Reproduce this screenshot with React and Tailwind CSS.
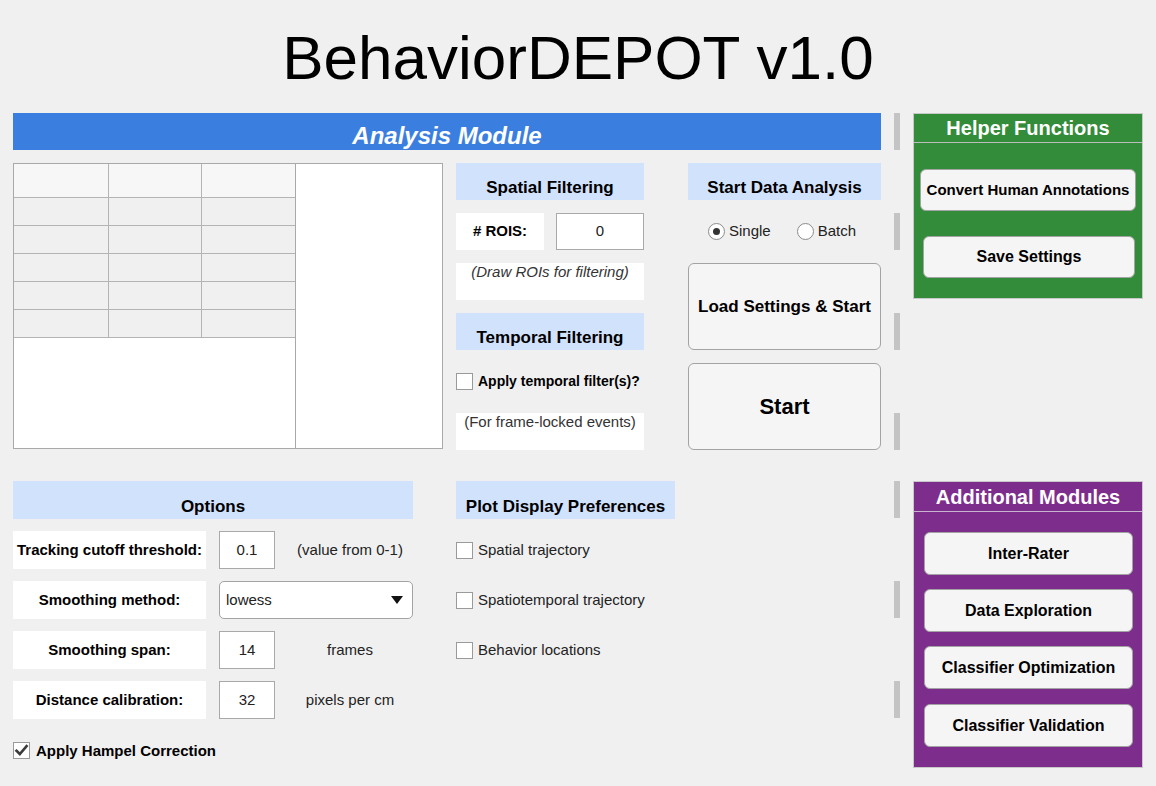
import React from 'react';

const BLUE_HEAD = 'bg-[#d1e2fc] flex items-end justify-center pb-[2px] text-[17px] leading-[20px] font-bold text-black whitespace-nowrap';
const BTN = 'rounded-[6px] border border-[#a3a3a3] bg-[#f5f5f5] font-bold text-black flex items-center justify-center whitespace-nowrap';
const BOX = 'bg-white border border-[#a9a9a9] flex items-center justify-center text-[15px] text-[#222]';

const Checkbox = ({ checked = false }) => (
    <span className="w-[17px] h-[17px] shrink-0 bg-white border border-[#9a9a9a] flex items-center justify-center">
        {checked && (
            <svg width="15" height="15" viewBox="0 0 15 15">
                <path d="M2.5 7.8 L5.8 11 L12.6 3.2" fill="none" stroke="#3c3c3c" strokeWidth="2.6" strokeLinecap="square" />
            </svg>
        )}
    </span>
);

const Radio = ({ on = false }) => (
    <span className="w-[17px] h-[17px] shrink-0 rounded-full bg-white border border-[#8c8c8c] flex items-center justify-center">
        {on && <span className="w-[7px] h-[7px] rounded-full bg-[#333]" />}
    </span>
);

const GrayBars = ({ count }) => (
    <div className="w-[6px] ml-[13px] flex flex-col gap-[63px] shrink-0">
        {Array.from({ length: count }).map((_, i) => <div key={i} className="h-[37px] bg-[#c4c4c4]" />)}
    </div>
);

const DataTable = () => (
    <div className="w-[430px] h-[286px] border border-[#a9a9a9] bg-white flex shrink-0">
        <div className="w-[281px] flex flex-col">
            {[0, 1, 2, 3, 4, 5].map(r => (
                <div key={r} className={`flex border-b border-[#b4b4b4] ${r === 0 ? 'h-[34px] bg-[#f7f7f7]' : 'h-[28px] bg-[#f0f0f0]'}`}>
                    <div className="w-[95px] border-r border-[#b4b4b4]" />
                    <div className="w-[93px] border-r border-[#b4b4b4]" />
                    <div className="flex-1" />
                </div>
            ))}
        </div>
        <div className="flex-1 border-l border-[#a9a9a9] bg-white" />
    </div>
);

const OptionRow = ({ label, children }) => (
    <div className="flex h-[38px] mt-[12px]">
        <div className="w-[193px] bg-white flex items-center justify-center text-[15px] font-bold text-black whitespace-nowrap">{label}</div>
        {children}
    </div>
);

const NumRow = ({ label, value, hint }) => (
    <OptionRow label={label}>
        <div className={`${BOX} w-[56px] ml-[13px]`}>{value}</div>
        <div className="w-[126px] ml-[12px] flex items-center justify-center text-[15px] text-[#222] whitespace-nowrap">{hint}</div>
    </OptionRow>
);

const PlotRow = ({ label }) => (
    <div className="flex items-center h-[38px] mt-[12px]">
        <Checkbox />
        <span className="ml-[5px] text-[15px] text-[#222] whitespace-nowrap">{label}</span>
    </div>
);

export default function App() {
    return (
        <div className="w-[1156px] h-[786px] bg-[#f0f0f0] overflow-hidden font-['Liberation_Sans',Arial,sans-serif] text-black">
            {/* Title */}
            <div className="h-[113px] pt-[27px] text-center text-[62px] leading-[62px] text-black">BehaviorDEPOT v1.0</div>

            {/* Top section */}
            <div className="flex px-[13px]">
                <div className="w-[868px] shrink-0">
                    <div className="h-[37px] bg-[#3a7ee0] pt-[9px] text-center text-white text-[24px] leading-[28px] font-bold italic">Analysis Module</div>
                    <div className="flex mt-[13px] h-[287px]">
                        <DataTable />

                        {/* Filtering */}
                        <div className="w-[188px] ml-[13px] flex flex-col">
                            <div className={`${BLUE_HEAD} h-[37px]`}>Spatial Filtering</div>
                            <div className="flex h-[37px] mt-[13px]">
                                <div className="w-[88px] bg-white flex items-center justify-center text-[15px] font-bold">#&nbsp;ROIS:</div>
                                <div className={`${BOX} w-[88px] ml-[12px]`}>0</div>
                            </div>
                            <div className="h-[37px] mt-[13px] bg-white text-center text-[15px] leading-[18px] italic text-[#333] whitespace-nowrap">(Draw ROIs for filtering)</div>
                            <div className={`${BLUE_HEAD} h-[37px] mt-[13px]`}>Temporal Filtering</div>
                            <div className="flex items-center h-[17px] mt-[23px]">
                                <Checkbox />
                                <span className="ml-[5px] text-[14px] font-bold whitespace-nowrap">Apply temporal filter(s)?</span>
                            </div>
                            <div className="h-[37px] mt-[23px] bg-white text-center text-[15px] leading-[18px] text-[#333] whitespace-nowrap">(For frame-locked events)</div>
                        </div>

                        {/* Start */}
                        <div className="w-[193px] ml-[44px] flex flex-col">
                            <div className={`${BLUE_HEAD} h-[37px]`}>Start Data Analysis</div>
                            <div className="flex items-center h-[37px] mt-[13px] pl-[20px] text-[15px] text-[#222]">
                                <Radio on />
                                <span className="ml-[4px]">Single</span>
                                <span className="ml-[26px]"><Radio /></span>
                                <span className="ml-[4px]">Batch</span>
                            </div>
                            <div className={`${BTN} h-[87px] mt-[13px] text-[17px]`}>Load Settings &amp; Start</div>
                            <div className={`${BTN} h-[87px] mt-[13px] text-[22px]`}>Start</div>
                        </div>
                    </div>
                </div>

                <GrayBars count={4} />

                <div className="w-[230px] h-[186px] ml-[13px] bg-[#338c39] border border-[#c8c8c8] flex flex-col">
                    <div className="h-[29px] border-b border-[#bdbdbd] flex items-center justify-center text-white text-[20px] font-bold whitespace-nowrap">Helper Functions</div>
                    <div className={`${BTN} h-[42px] mt-[26px] ml-[6px] w-[216px] text-[15px]`}>Convert Human Annotations</div>
                    <div className={`${BTN} h-[42px] mt-[25px] ml-[9px] w-[212px] text-[16px]`}>Save Settings</div>
                </div>
            </div>

            {/* Bottom section */}
            <div className="flex px-[13px] mt-[31px]">
                <div className="w-[868px] shrink-0 flex">
                    <div className="w-[400px] flex flex-col">
                        <div className={`${BLUE_HEAD} h-[38px]`}>Options</div>
                        <NumRow label="Tracking cutoff threshold:" value="0.1" hint="(value from 0-1)" />
                        <OptionRow label="Smoothing method:">
                            <div className="w-[194px] ml-[13px] rounded-[5px] bg-white border border-[#a3a3a3] flex items-center justify-between pl-[6px] pr-[9px] text-[15px] text-[#222]">
                                <span>lowess</span>
                                <svg width="12" height="8" viewBox="0 0 12 8"><path d="M0 0 H12 L6 8 Z" fill="#111" /></svg>
                            </div>
                        </OptionRow>
                        <NumRow label="Smoothing span:" value="14" hint="frames" />
                        <NumRow label="Distance calibration:" value="32" hint="pixels per cm" />
                        <div className="flex items-center h-[17px] mt-[23px]">
                            <Checkbox checked />
                            <span className="ml-[6px] pt-[2px] text-[15px] font-bold whitespace-nowrap">Apply Hampel Correction</span>
                        </div>
                    </div>

                    <div className="w-[219px] ml-[43px] flex flex-col">
                        <div className={`${BLUE_HEAD} h-[38px]`}>Plot Display Preferences</div>
                        <PlotRow label="Spatial trajectory" />
                        <PlotRow label="Spatiotemporal trajectory" />
                        <PlotRow label="Behavior locations" />
                    </div>
                </div>

                <GrayBars count={3} />

                <div className="w-[230px] h-[287px] ml-[13px] bg-[#7d2e8c] border border-[#c8c8c8] flex flex-col">
                    <div className="h-[30px] border-b border-[#c9b4cf] flex items-center justify-center text-white text-[20px] font-bold whitespace-nowrap">Additional Modules</div>
                    <div className={`${BTN} h-[43px] mt-[20px] ml-[10px] w-[209px] text-[16px]`}>Inter-Rater</div>
                    <div className={`${BTN} h-[43px] mt-[14px] ml-[10px] w-[209px] text-[16px]`}>Data Exploration</div>
                    <div className={`${BTN} h-[43px] mt-[14px] ml-[10px] w-[209px] text-[16px]`}>Classifier Optimization</div>
                    <div className={`${BTN} h-[43px] mt-[15px] ml-[10px] w-[209px] text-[16px]`}>Classifier Validation</div>
                </div>
            </div>
        </div>
    );
}
